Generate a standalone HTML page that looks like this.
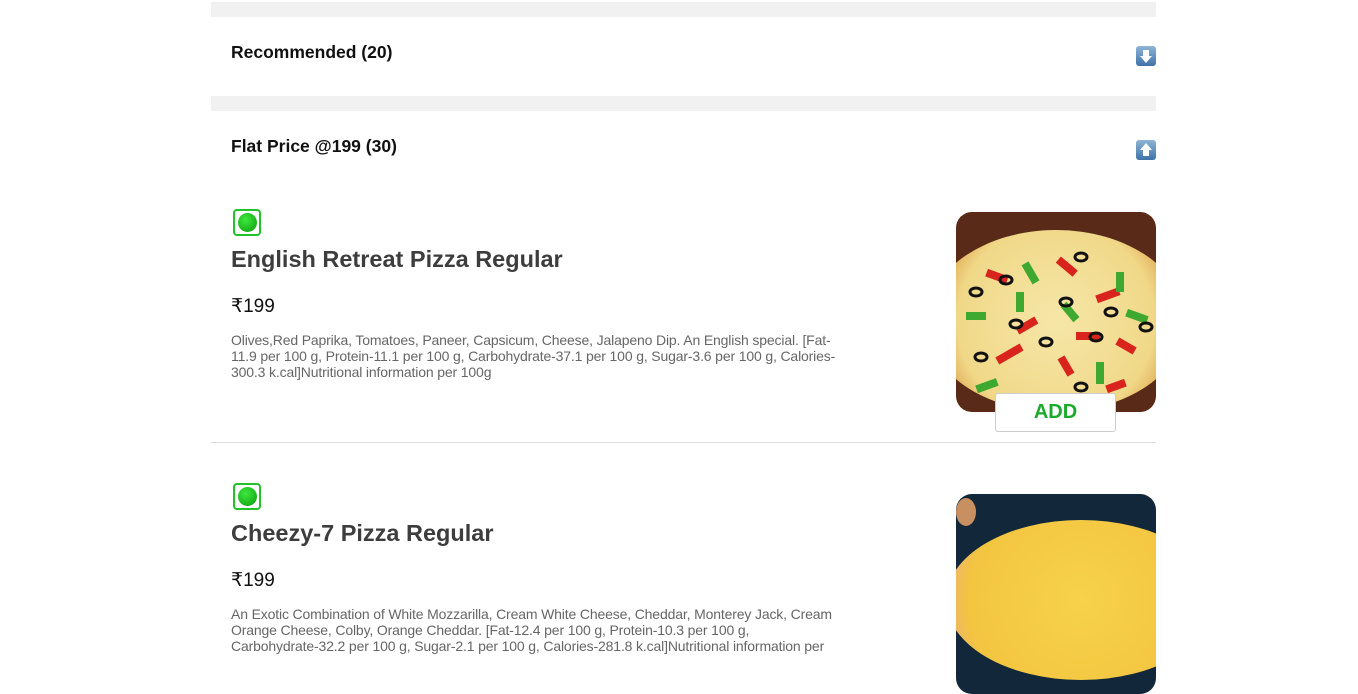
<!DOCTYPE html>
<html><head><meta charset="utf-8"><style>
*{margin:0;padding:0;box-sizing:border-box}
body{width:1358px;height:653px;overflow:hidden;background:#fff;font-family:"Liberation Sans",sans-serif;position:relative}
.a{position:absolute;white-space:nowrap}
.bar{position:absolute;left:211px;width:945px;height:15px;background:#f1f1f1}
.h{font-size:17.5px;font-weight:bold;color:#111;left:231px}
.ico{position:absolute;left:1136px;width:20px;height:20px;border-radius:3px;background:linear-gradient(#8fb4d6,#3f73a8);}
.ico svg{position:absolute;left:0;top:0}
.veg{position:absolute;left:233px;width:28px;height:27px;border:2px solid #22c32a;border-radius:4px}
.veg i{position:absolute;left:3px;top:2px;width:19px;height:19px;border-radius:50%;background:radial-gradient(circle at 40% 35%,#3ee83e,#0a9a0a)}
.t{font-size:23.5px;font-weight:bold;color:#3d3d3d;left:231px}
.p{font-size:19px;color:#111;left:231px}
.d{position:absolute;left:231px;width:700px;font-size:14px;line-height:16px;color:#666;white-space:nowrap;letter-spacing:-0.15px}
.img{position:absolute;left:956px;width:200px;height:200px;border-radius:16px;overflow:hidden}
</style></head><body>
<div class="bar" style="top:2px"></div>
<div class="a h" style="top:42px">Recommended (20)</div>
<div class="ico" style="top:46px"><svg width="20" height="20"><path d="M7 4h6v6h3l-6 7-6-7h3z" fill="#fff"/></svg></div>
<div class="bar" style="top:96px"></div>
<div class="a h" style="top:136px">Flat Price @199 (30)</div>
<div class="ico" style="top:140px"><svg width="20" height="20"><path d="M7 16h6v-6h3l-6-7-6 7h3z" fill="#fff"/></svg></div>

<div class="veg" style="top:209px"><i></i></div>
<div class="a t" style="top:246px">English Retreat Pizza Regular</div>
<div class="a p" style="top:295px">₹199</div>
<div class="d" style="top:332px">Olives,Red Paprika, Tomatoes, Paneer, Capsicum, Cheese, Jalapeno Dip. An English special. [Fat-<br>11.9 per 100 g, Protein-11.1 per 100 g, Carbohydrate-37.1 per 100 g, Sugar-3.6 per 100 g, Calories-<br>300.3 k.cal]Nutritional information per 100g</div>
<div class="img" style="top:212px;background:#5a2a18">
 <div style="position:absolute;left:-30px;top:18px;width:260px;height:182px;border-radius:50%;background:radial-gradient(circle,#f6e7a8 0%,#f0d888 62%,#d9973f 84%,#9c4e24 100%)"></div>
 <svg width="200" height="200" style="position:absolute;left:0;top:0">
  <g fill="#d8241c"><rect x="30" y="60" width="22" height="8" transform="rotate(20 40 64)"/><rect x="100" y="50" width="22" height="8" transform="rotate(40 110 54)"/><rect x="140" y="80" width="24" height="8" transform="rotate(-20 150 84)"/><rect x="60" y="110" width="22" height="8" transform="rotate(-30 70 114)"/><rect x="120" y="120" width="24" height="8"/><rect x="40" y="140" width="28" height="8" transform="rotate(-30 50 144)"/><rect x="100" y="150" width="20" height="8" transform="rotate(60 110 154)"/><rect x="160" y="130" width="20" height="8" transform="rotate(30 170 134)"/><rect x="150" y="170" width="20" height="8" transform="rotate(-20 160 174)"/></g>
  <g fill="#3fa830"><rect x="70" y="50" width="8" height="22" transform="rotate(-30 74 60)"/><rect x="110" y="90" width="8" height="20" transform="rotate(-40 114 100)"/><rect x="10" y="100" width="20" height="8"/><rect x="160" y="60" width="8" height="20"/><rect x="20" y="170" width="22" height="8" transform="rotate(-20 30 174)"/><rect x="140" y="150" width="8" height="22"/><rect x="60" y="80" width="8" height="20"/><rect x="170" y="100" width="22" height="8" transform="rotate(20 180 104)"/></g>
  <g fill="none" stroke="#111" stroke-width="3"><ellipse cx="50" cy="68" rx="6" ry="4"/><ellipse cx="125" cy="45" rx="6" ry="4"/><ellipse cx="110" cy="90" rx="6" ry="4"/><ellipse cx="20" cy="80" rx="6" ry="4"/><ellipse cx="60" cy="112" rx="6" ry="4"/><ellipse cx="140" cy="125" rx="6" ry="4"/><ellipse cx="25" cy="145" rx="6" ry="4"/><ellipse cx="155" cy="100" rx="6" ry="4"/><ellipse cx="90" cy="130" rx="6" ry="4"/><ellipse cx="125" cy="175" rx="6" ry="4"/><ellipse cx="190" cy="115" rx="6" ry="4"/></g>
 </svg>
</div>
<div style="position:absolute;left:995px;top:393px;width:121px;height:39px;background:#fff;border:1px solid #ccc;border-radius:3px;color:#1aab2c;font-weight:bold;font-size:20px;text-align:center;line-height:37px">ADD</div>

<div style="position:absolute;left:211px;top:442px;width:945px;height:1px;background:#ddd"></div>

<div class="veg" style="top:483px"><i></i></div>
<div class="a t" style="top:520px">Cheezy-7 Pizza Regular</div>
<div class="a p" style="top:569px">₹199</div>
<div class="d" style="top:606px">An Exotic Combination of White Mozzarilla, Cream White Cheese, Cheddar, Monterey Jack, Cream<br>Orange Cheese, Colby, Orange Cheddar. [Fat-12.4 per 100 g, Protein-10.3 per 100 g,<br>Carbohydrate-32.2 per 100 g, Sugar-2.1 per 100 g, Calories-281.8 k.cal]Nutritional information per</div>
<div class="img" style="top:494px;background:#12283a">
 <div style="position:absolute;left:-10px;top:26px;width:270px;height:160px;border-radius:50%;background:radial-gradient(circle,#f7d24a 0%,#f3c540 72%,#e8b07a 90%,#6a3b2a 100%)"></div>
 <div style="position:absolute;left:0;top:4px;width:20px;height:28px;border-radius:50%;background:#c89060"></div>
</div>
</body></html>
